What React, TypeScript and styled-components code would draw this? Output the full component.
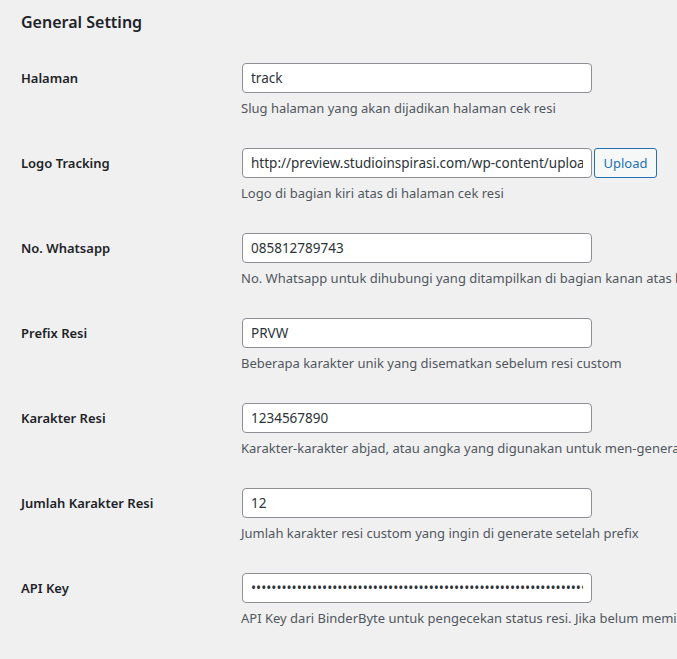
import React from "react";
import styled, { createGlobalStyle } from "styled-components";

const GlobalStyle = createGlobalStyle`
  html, body {
    margin: 0;
    padding: 0;
    background: #f0f0f1;
    overflow: hidden;
  }
  body {
    font-family: "Noto Sans", "Open Sans", sans-serif;
    color: #1d2327;
    font-size: 13px;
  }
`;

const Wrap = styled.div`
  padding: 10px 0 0 21px;
  width: 900px;
`;

const Title = styled.h2`
  margin: 0;
  font-size: 16px;
  font-weight: 600;
  line-height: 24px;
  color: #1d2327;
`;

const FormTable = styled.table`
  border-collapse: collapse;
  margin-top: 14px;
`;

const Label = styled.th`
  width: 200px;
  padding: 21px 20px 20px 0;
  text-align: left;
  vertical-align: top;
  font-size: 13px;
  font-weight: 600;
  line-height: 18px;
  color: #1d2327;
`;

const Cell = styled.td`
  padding: 15px 10px 15px 0;
  vertical-align: top;
  line-height: 18px;
`;

const Field = styled.div`
  display: flex;
  gap: 2px;
`;

const Input = styled.input`
  box-sizing: border-box;
  width: 350px;
  height: 30px;
  margin: 0 0 0 1px;
  padding: 0 8px;
  border: 1px solid #8c8f94;
  border-radius: 4px;
  background: #fff;
  font-family: inherit;
  font-size: 13.5px;
  color: #2c3338;
  outline: none;
`;

const UploadButton = styled.button`
  box-sizing: border-box;
  width: 63px;
  height: 30px;
  padding: 0;
  border: 1px solid #2271b1;
  border-radius: 3px;
  background: #f6f7f7;
  color: #2271b1;
  font-family: inherit;
  font-size: 13px;
  cursor: pointer;
`;

const Description = styled.p`
  margin: 5px 0 0;
  font-size: 13px;
  line-height: 20px;
  color: #50575e;
  white-space: nowrap;
`;

type Row = {
  label: string;
  value: string;
  description: string;
  upload?: boolean;
  secret?: boolean;
};

const rows: Row[] = [
  { label: "Halaman", value: "track", description: "Slug halaman yang akan dijadikan halaman cek resi" },
  {
    label: "Logo Tracking",
    value: "http://preview.studioinspirasi.com/wp-content/uploads/2021/logo.png",
    description: "Logo di bagian kiri atas di halaman cek resi",
    upload: true,
  },
  {
    label: "No. Whatsapp",
    value: "085812789743",
    description: "No. Whatsapp untuk dihubungi yang ditampilkan di bagian kanan atas halaman cek resi",
  },
  { label: "Prefix Resi", value: "PRVW", description: "Beberapa karakter unik yang disematkan sebelum resi custom" },
  {
    label: "Karakter Resi",
    value: "1234567890",
    description: "Karakter-karakter abjad, atau angka yang digunakan untuk men-generate resi custom",
  },
  {
    label: "Jumlah Karakter Resi",
    value: "12",
    description: "Jumlah karakter resi custom yang ingin di generate setelah prefix",
  },
  {
    label: "API Key",
    value: "a1b2c3d4e5f6a7b8c9d0e1f2a3b4c5d6e7f8a9b0c1d2e3f4a5b6c7d8e9f0a1b2c3d4",
    description: "API Key dari BinderByte untuk pengecekan status resi. Jika belum memiliki API Key, silakan daftar",
    secret: true,
  },
];

export default function App() {
  return (
    <>
      <GlobalStyle />
      <Wrap>
        <Title>General Setting</Title>
        <FormTable>
          <tbody>
            {rows.map((row) => (
              <tr key={row.label}>
                <Label>{row.label}</Label>
                <Cell>
                  <Field>
                    <Input
                      type={row.secret ? "password" : "text"}
                      defaultValue={row.value}
                      readOnly
                    />
                    {row.upload && <UploadButton>Upload</UploadButton>}
                  </Field>
                  <Description>{row.description}</Description>
                </Cell>
              </tr>
            ))}
          </tbody>
        </FormTable>
      </Wrap>
    </>
  );
}
